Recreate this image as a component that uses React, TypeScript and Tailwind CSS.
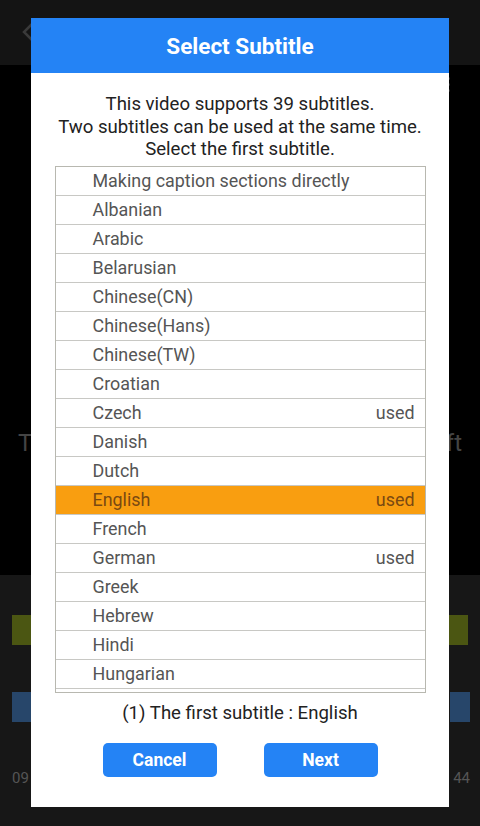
import { useState } from "react";

type Subtitle = { name: string; used?: boolean };

const subtitles: Subtitle[] = [
  { name: "Making caption sections directly" },
  { name: "Albanian" },
  { name: "Arabic" },
  { name: "Belarusian" },
  { name: "Chinese(CN)" },
  { name: "Chinese(Hans)" },
  { name: "Chinese(TW)" },
  { name: "Croatian" },
  { name: "Czech", used: true },
  { name: "Danish" },
  { name: "Dutch" },
  { name: "English", used: true },
  { name: "French" },
  { name: "German", used: true },
  { name: "Greek" },
  { name: "Hebrew" },
  { name: "Hindi" },
  { name: "Hungarian" },
];

export default function App() {
  const [selected, setSelected] = useState("English");

  return (
    <div
      className="relative h-[826px] w-[480px] overflow-hidden bg-black"
      style={{ fontFamily: "Roboto, 'Noto Sans', sans-serif" }}
    >
      {/* dimmed player behind the dialog */}
      <div className="absolute inset-0 flex flex-col">
        <div className="flex h-[65px] items-start bg-[#141414] pl-[22px] pt-[22px]">
          <svg width="12" height="20" viewBox="0 0 12 20" fill="none" stroke="#3a3a3a" strokeWidth="2.5">
            <path d="M10 2 2 10l8 8" />
          </svg>
        </div>
        <div className="relative flex-1 bg-black">
          <div className="absolute right-[30px] top-[12px] flex flex-col gap-[3px]">
            <span className="h-[3px] w-[3px] rounded-full bg-[#333]" />
            <span className="h-[3px] w-[3px] rounded-full bg-[#333]" />
            <span className="h-[3px] w-[3px] rounded-full bg-[#333]" />
          </div>
          <span className="absolute left-[18px] top-[360px] text-[24px] text-[#444]">T</span>
          <span className="absolute right-[18px] top-[360px] text-[24px] text-[#444]">ft</span>
        </div>
        <div className="relative h-[251px] bg-[#171717]">
          <div className="absolute left-[12px] top-[40px] h-[30px] w-[20px] bg-[#4b5612]" />
          <div className="absolute right-[12px] top-[40px] h-[30px] w-[20px] bg-[#4b5612]" />
          <div className="absolute left-[12px] top-[117px] h-[30px] w-[20px] bg-[#27466a]" />
          <div className="absolute right-[10px] top-[117px] h-[30px] w-[20px] bg-[#27466a]" />
          <span className="absolute left-[12px] top-[192px] text-[15px] text-[#555]">09</span>
          <span className="absolute right-[10px] top-[192px] text-[15px] text-[#555]">44</span>
        </div>
      </div>

      {/* dialog */}
      <div className="absolute left-[31px] top-[18px] flex h-[789px] w-[418px] flex-col bg-white">
        <div className="flex h-[55px] items-center justify-center bg-[#2483f5] pt-[2px]">
          <h1 className="text-[22.5px] font-bold text-white">Select Subtitle</h1>
        </div>

        <div className="flex flex-1 flex-col items-center px-[12px] pt-[20px]">
          <p className="text-center text-[18.6px] leading-[22.5px] text-[#222]">
            This video supports 39 subtitles.
            <br />
            Two subtitles can be used at the same time.
            <br />
            Select the first subtitle.
          </p>

          <div className="mt-[5px] h-[527px] w-[371px] overflow-hidden border border-[#b8b8b0]">
            {subtitles.map((s) => {
              const active = s.name === selected;
              return (
                <button
                  key={s.name}
                  onClick={() => setSelected(s.name)}
                  className={[
                    "flex h-[29px] w-full items-center justify-between border-b border-[#c8c8c4] pl-[37px] pr-[10px] pt-[1px] text-left text-[17.9px]",
                    active ? "bg-[#f99e10] text-[#7a4912]" : "bg-white text-[#555]",
                  ].join(" ")}
                >
                  <span>{s.name}</span>
                  {s.used ? <span>used</span> : null}
                </button>
              );
            })}
          </div>

          <p className="mt-[9px] text-[18.6px] leading-[22px] text-[#222]">
            (1) The first subtitle : {selected}
          </p>

          <div className="mt-[19px] flex gap-[47px]">
            <button className="h-[34px] w-[114px] rounded-[5px] bg-[#2483f5] pt-[2px] text-[17.5px] font-bold text-white">
              Cancel
            </button>
            <button className="h-[34px] w-[114px] rounded-[5px] bg-[#2483f5] pt-[2px] text-[17.5px] font-bold text-white">
              Next
            </button>
          </div>
        </div>
      </div>
    </div>
  );
}
